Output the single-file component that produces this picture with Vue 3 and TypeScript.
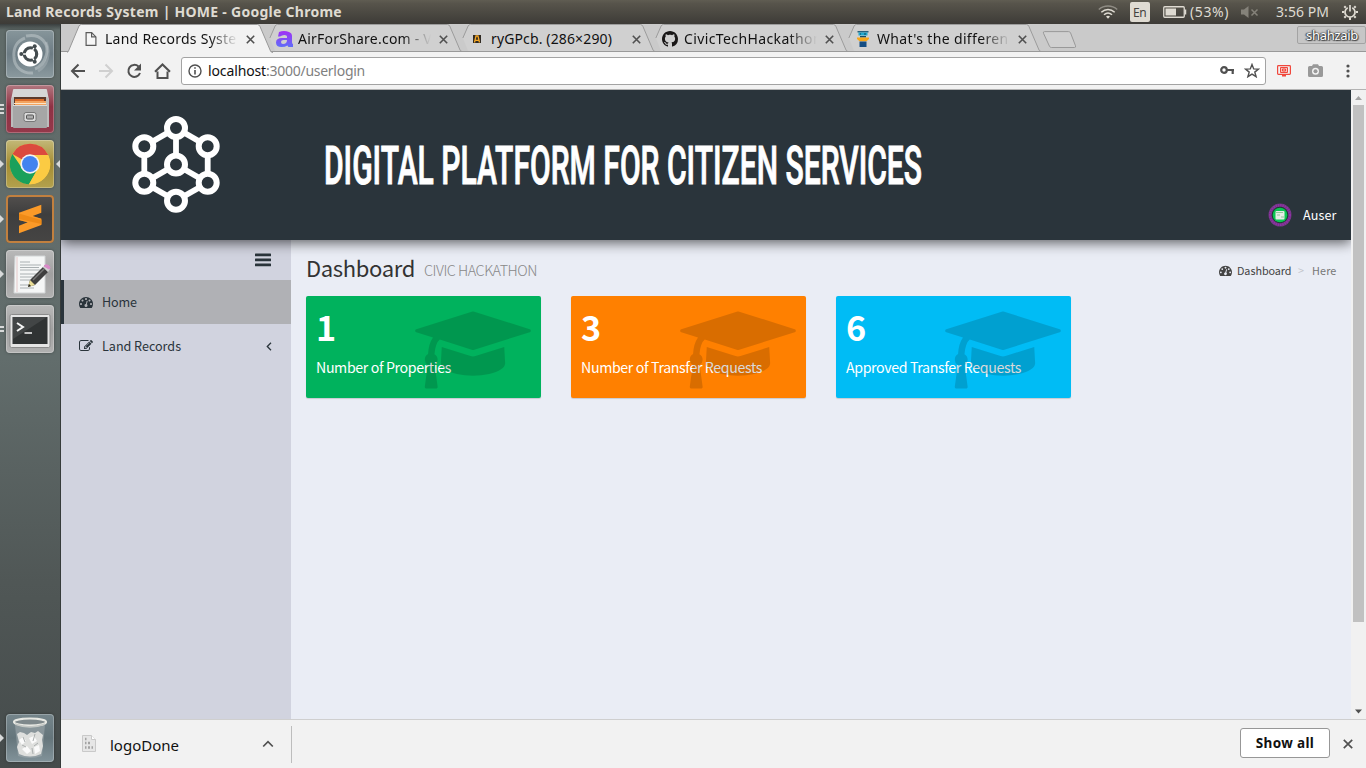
<script setup lang="ts">
import type { Directive } from 'vue'

interface Tab { title: string; icon: string; width: number; active?: boolean }
interface Card { value: number; label: string; tone: string; width: number }
interface App { name: string; marks: number }

/* Spreads a label over a given pixel width by adjusting its letter spacing. */
const vFit: Directive<HTMLElement, number> = {
  mounted(el, binding) {
    const chars = (el.textContent ?? '').trim().length
    const natural = el.getBoundingClientRect().width
    if (chars > 0) el.style.letterSpacing = `${(binding.value - natural) / chars}px`
  },
}

const tabs: Tab[] = [
  { title: 'Land Records Syste', icon: 'page', width: 131.5, active: true },
  { title: 'AirForShare.com - V', icon: 'air', width: 134 },
  { title: 'ryGPcb. (286×290)', icon: 'ry', width: 121 },
  { title: 'CivicTechHackathon', icon: 'github', width: 138 },
  { title: "What's the differen", icon: 'tower', width: 131.5 },
]

const apps: App[] = [
  { name: 'dash', marks: 0 },
  { name: 'files', marks: 3 },
  { name: 'chrome', marks: 1 },
  { name: 'sublime', marks: 1 },
  { name: 'editor', marks: 1 },
  { name: 'terminal', marks: 2 },
  { name: 'trash', marks: 1 },
]

const cards: Card[] = [
  { value: 1, label: 'Number of Properties', tone: 'green', width: 135 },
  { value: 3, label: 'Number of Transfer Requests', tone: 'orange', width: 181 },
  { value: 6, label: 'Approved Transfer Requests', tone: 'blue', width: 175 },
]

const tacho =
  'M384 1152q0-53-37.5-90.5t-90.5-37.5-90.5 37.5-37.5 90.5 37.5 90.5 90.5 37.5 90.5-37.5 37.5-90.5zm192-448q0-53-37.5-90.5t-90.5-37.5-90.5 37.5-37.5 90.5 37.5 90.5 90.5 37.5 90.5-37.5 37.5-90.5zm428 481l101-382q6-26-7.5-48.5t-38.5-29.5-48 6.5-30 39.5l-101 382q-60 5-107 43.5t-63 98.5q-20 77 20 146t117 89 146-20 89-117q16-60-6-117t-72-91zm660-33q0-53-37.5-90.5t-90.5-37.5-90.5 37.5-37.5 90.5 37.5 90.5 90.5 37.5 90.5-37.5 37.5-90.5zm-640-640q0-53-37.5-90.5t-90.5-37.5-90.5 37.5-37.5 90.5 37.5 90.5 90.5 37.5 90.5-37.5 37.5-90.5zm448 192q0-53-37.5-90.5t-90.5-37.5-90.5 37.5-37.5 90.5 37.5 90.5 90.5 37.5 90.5-37.5 37.5-90.5zm320 448q0 261-141 483-19 29-54 29h-1402q-35 0-54-29-141-221-141-483 0-182 71-348t191-286 286-191 348-71 348 71 286 191 191 286 71 348z'
const edit =
  'M888 1184l116-116-152-152-116 116v56h96v96h56zm440-720q-16-16-33 1l-350 350q-17 17-1 33t33-1l350-350q17-17 1-33zm80 594v190q0 119-84.5 203.5t-203.5 84.5h-832q-119 0-203.5-84.5t-84.5-203.5v-832q0-119 84.5-203.5t203.5-84.5h832q63 0 117 25 15 7 18 23 3 17-9 29l-49 49q-14 14-32 8-23-6-45-6h-832q-66 0-113 47t-47 113v832q0 66 47 113t113 47h832q66 0 113-47t47-113v-126q0-13 9-22l64-64q15-15 35-7t20 29zm-96-738l288 288-672 672h-288v-288zm444 132l-92 92-288-288 92-92q28-28 68-28t68 28l152 152q28 28 28 68t-28 68z'
const cap =
  'M1774 836l18 316q4 69-82 128t-235 93.5-323 34.5-323-34.5-235-93.5-82-128l18-316 574 181q22 7 48 7t48-7zM2304 512q0 23-22 31l-1120 352q-4 1-10 1t-10-1l-652-206q-43 34-71 111.5t-34 178.5q63 36 63 109 0 69-58 107l58 433q2 14-8 25-9 11-24 11h-192q-15 0-24-11-10-11-8-25l58-433q-58-38-58-107 0-73 65-111 11-207 98-330l-333-104q-22-8-22-31t22-31l1120-352q4-1 10-1t10 1l1120 352q22 8 22 31z'
const octocat =
  'M8 0C3.58 0 0 3.58 0 8c0 3.54 2.29 6.53 5.47 7.59.4.07.55-.17.55-.38 0-.19-.01-.82-.01-1.49-2.01.37-2.53-.49-2.69-.94-.09-.23-.48-.94-.82-1.13-.28-.15-.68-.52-.01-.53.63-.01 1.08.58 1.23.82.72 1.21 1.87.87 2.33.66.07-.52.28-.87.51-1.07-1.78-.2-3.64-.89-3.64-3.95 0-.87.31-1.59.82-2.15-.08-.2-.36-1.02.08-2.12 0 0 .67-.21 2.2.82.64-.18 1.32-.27 2-.27s1.36.09 2 .27c1.53-1.04 2.2-.82 2.2-.82.44 1.1.16 1.92.08 2.12.51.56.82 1.27.82 2.15 0 3.07-1.87 3.75-3.65 3.95.29.25.54.73.54 1.48 0 1.07-.01 1.93-.01 2.2 0 .21.15.46.55.38A8.01 8.01 0 0 0 16 8c0-4.42-3.58-8-8-8z'

const nodes: [number, number][] = [
  [44, 12], [12.3, 30.3], [75.7, 30.3], [44, 48.5], [12.3, 66.7], [75.7, 66.7], [44, 84.7],
]
const links: [number, number][] = [[0, 1], [0, 2], [0, 3], [1, 4], [2, 5], [3, 4], [3, 5], [4, 6], [5, 6]]
</script>

<template>
  <div class="desktop">
    <header class="panel">
      <b class="panel-title"><span v-fit="336">Land Records System | HOME - Google Chrome</span></b>
      <div class="indicators">
        <svg class="wifi" width="20" height="14" viewBox="0 0 20 14" fill="none" stroke="#dfdbd2" stroke-width="1.5">
          <path d="M.8 4.5C6-.2 14-.2 19.200 4.500" stroke="#8f8c84" />
          <path d="M3.300 7.200c4-3.600 9.400-3.600 13.400 0" />
          <path d="M6 9.800c2.400-2.200 5.600-2.200 8 0" />
          <path d="M8 11.500q2-1.500 4 0l-2 2.200z" fill="#dfdbd2" stroke="none" />
        </svg>
        <span class="lang"><span v-fit="13">En</span></span>
        <svg class="battery" width="25" height="12" viewBox="0 0 25 12">
          <rect x=".75" y=".75" width="20.500" height="10.500" rx="1" fill="none" stroke="#dfdbd2" stroke-width="1.300" />
          <path d="M22.500 3.500v5" stroke="#dfdbd2" stroke-width="1.500" />
          <rect x="2.500" y="2.500" width="10.500" height="7" fill="#dfdbd2" />
        </svg>
        <span class="percent"><span v-fit="39">(53%)</span></span>
        <svg class="sound" width="18" height="12" viewBox="0 0 18 12">
          <path d="M0 3.500h3L7.500 0v12L3 8.500H0z" fill="#85827a" />
          <path d="M10.500 3.500l6 6m0-6l-6 6" stroke="#85827a" stroke-width="1.500" />
        </svg>
        <span class="clock"><span v-fit="53">3:56 PM</span></span>
        <svg class="gear" width="16" height="16" viewBox="0 0 16 16" fill="none" stroke="#dfdbd2">
          <path d="M5.700 3.700a5 5 0 1 0 4.600 0" stroke-width="1.700" />
          <path d="M8 1v6.500" stroke-width="1.700" />
          <path d="M0 8h2.200m11.600 0H16M8 13.500V16M2.300 2.300l1.500 1.500m8.400 0l1.500-1.500M2.300 13.700l1.500-1.500m8.400 0l1.500 1.500" stroke-width="2" />
        </svg>
      </div>
    </header>

    <div class="workspace">
      <nav class="launcher">
        <div v-for="app in apps" :key="app.name" class="slot" :class="app.name">
          <span class="marks">
            <svg v-if="app.marks === 1" width="4" height="8" viewBox="0 0 4 8"><path d="M0 0l4 4-4 4z" fill="#d8dada" /></svg>
            <template v-else><i v-for="n in app.marks" :key="n" /></template>
          </span>
          <span class="tile">
            <svg v-if="app.name === 'dash'" width="48" height="48" viewBox="0 0 48 48">
              <g fill="none" stroke="#c6ced0" stroke-opacity=".5" stroke-width="3">
                <path d="M20 6c15-3 24 8 20 20-2 7-6 11-11 13" />
                <path d="M8 27c0 10 9 17 19 16M8 27c-1-9 3-16 11-19" />
                <path d="M40 12c5 12 1 24-8 29" stroke-opacity=".3" />
              </g>
              <circle cx="24" cy="24" r="12.500" fill="#fff" />
              <circle cx="24.500" cy="24" r="6.200" fill="none" stroke="#444c4f" stroke-width="3.200" />
              <g stroke="#fff" stroke-width="1.300"><path d="M24.500 24l-10 0M24.500 24l5-9M24.500 24l5 9" /></g>
              <circle cx="24.500" cy="24" r="4.500" fill="#fff" />
              <g fill="#444c4f"><circle cx="15.300" cy="24" r="2" /><circle cx="28.700" cy="16.300" r="2" /><circle cx="28.700" cy="31.700" r="2" /></g>
            </svg>
            <svg v-else-if="app.name === 'files'" width="48" height="48" viewBox="0 0 48 48">
              <path d="M7 5q0-1 1-1h32q1 0 1 1l2 10H5z" fill="#d6d6d6" />
              <path d="M5 15q0-2 2-3h34q2 1 2 3v27H5z" fill="#bcbcbc" />
              <path d="M8 12h32v9H8z" fill="#5c3a2c" />
              <path d="M9 14h29v6H9z" fill="#d96c2c" /><path d="M9 16h31v4H9z" fill="#f3a35f" />
              <path d="M8 18.500h32" stroke="#fbe3c6" />
              <path d="M7 20h34v22q0 1-1 1H8q-1 0-1-1z" fill="#a6a6a6" />
              <path d="M7 20.500h34" stroke="#dadada" />
              <rect x="18" y="27.500" width="12" height="9" rx="2" fill="#ddd" stroke="#777" />
              <rect x="20.500" y="30" width="7" height="4" rx="1" fill="#aaa" stroke="#555" />
            </svg>
            <svg v-else-if="app.name === 'chrome'" width="48" height="48" viewBox="0 0 48 48">
              <circle cx="24" cy="24" r="20.300" fill="#fbcb43" />
              <path d="M24 24L6.400 13.900A20.300 20.300 0 0 1 41.900 14.500L42 15H24z" fill="#db4a3e" />
              <path d="M6.400 13.900A20.300 20.300 0 0 0 23 44.300L32 28.500 24 24l-8 4z" fill="#1aa05b" />
              <path d="M24 15h18a20.300 20.300 0 0 1-19 29.300l9-16z" fill="#fbcb43" />
              <circle cx="24" cy="24" r="9.700" fill="#f3f3f3" /><circle cx="24" cy="24" r="8" fill="#4383ef" />
            </svg>
            <svg v-else-if="app.name === 'sublime'" width="48" height="48" viewBox="0 0 48 48">
              <path d="M13 17.700L35.300 23.700V30L21.700 27.300 13 25z" fill="#e8820f" />
              <path d="M13 17.700L35.300 9.700v8L26.700 21 35.300 23.700V30L13 38.300v-7.600l8.700-3.400L13 25z" fill="#fb9a28" />
              <path d="M13 18.500l22.300 6.500v4L13 24z" fill="#ee8a17" />
            </svg>
            <svg v-else-if="app.name === 'editor'" width="48" height="48" viewBox="0 0 48 48">
              <path d="M9 6h30v37H8z" fill="#f5f6f6" stroke="#d2d5d6" />
              <path d="M11 7v35" stroke="#dfb5b5" stroke-width=".7" />
              <path d="M14 12h10m-10 3h21M14 17.500h19M14 20h21m-21 4h20m-20 3h13m-13 3h10m-10 5h9m-9 3h14" stroke="#aab0b2" />
              <path d="M22 37l2-7L37 17l5 5-13 13z" fill="#3f3f3f" /><path d="M27 30l12-12" stroke="#777" stroke-width="1.500" />
              <path d="M37 17l2-2 5 4-2 3z" fill="#d0d0d0" /><path d="M39 15q3-1 5 2 0 2-1 2l-5-3z" fill="#d98bc8" stroke="#d98bc8" />
              <path d="M22 37l2-7 5 5z" fill="#e9dc95" /><path d="M22 37l1-3 2 2z" fill="#222" />
            </svg>
            <svg v-else-if="app.name === 'terminal'" width="48" height="48" viewBox="0 0 48 48">
              <rect x="4" y="9.500" width="40" height="33" rx="1.500" fill="#e5e5e5" stroke="#8b8b8b" />
              <rect x="6.500" y="12" width="35" height="27" fill="#303334" /><path d="M7 12h34L7 34z" fill="#424546" />
              <path d="M11 18l6 4-6 4" fill="none" stroke="#f4f4f4" stroke-width="2" /><path d="M18.500 28h7.500" stroke="#f4f4f4" stroke-width="1.700" />
            </svg>
            <svg v-else width="48" height="48" viewBox="0 0 48 48">
              <path d="M9 11l3 31q12 4 24 0l3-31z" fill="#a4adb0" fill-opacity=".55" />
              <path d="M11 20l3-2 4 1 3 2 4-3 4 1 3-2 5 4-1 5 1 6-2 8q-11 5-22 0l-2-7 2-5z" fill="#dedfdd" />
              <path d="M13 26l4-3 3 4-4 4zm10-2l5-2 3 5-5 3zm-7 11l5-3 4 5-4 3zm12-2l5-2 1 6-5 3z" fill="#fafafa" />
              <path d="M17 23l2 5m10-8l-2 7m5 2l-4 3m-12-1l4 2m6 1l1 6" stroke="#aaaeae" />
              <ellipse cx="24" cy="8" rx="16" ry="3.500" fill="#7e888b" stroke="#e7e8e3" stroke-width="2.200" />
              <path d="M9 10q15 6 30 0" fill="none" stroke="#c4c8c5" stroke-width="1.500" />
            </svg>
          </span>
          <svg v-if="app.name === 'chrome'" class="focus" width="4" height="8" viewBox="0 0 4 8"><path d="M4 0L0 4l4 4z" fill="#d8dada" /></svg>
        </div>
      </nav>

      <div class="browser">
        <div class="tabstrip">
          <div v-for="tab in tabs" :key="tab.title" class="tab" :class="{ active: tab.active }">
            <svg class="shape" width="207" height="29" viewBox="0 0 207 29">
              <path v-if="tab.active" d="M0 29L0 28.500Q1 28 1.500 27L12 2Q12.800.5 14.500.5H190.500Q192 .5 193 2.500L203.500 27Q204 28.500 206 28.500V29z" fill="#f2f2f2" />
              <path v-else d="M6.500 14.500L12 2Q12.800.5 14.500.5H190.500Q192 .5 193 2.500L203.500 27 206 28H12z" fill="#d0d0d0" />
              <path v-if="tab.active" d="M0 28.500Q1 28 1.500 27L12 2Q12.800.5 14.500.5H190.500Q192 .5 193 2.500L203.500 27Q204 28.500 206 28.500" fill="none" stroke="#999" />
              <path v-else d="M6.500 14.500L12 2Q12.800.5 14.500.5H190.500Q192 .5 193 2.500L203.500 27Q204 28 205 28" fill="none" stroke="#999" />
            </svg>
            <span class="favicon">
              <svg v-if="tab.icon === 'page'" width="16" height="16" viewBox="0 0 16 16" fill="#f6f6f6" stroke="#5a5a5a" stroke-width="1.200"><path d="M3.100 1.600h5.500l4.300 4.300v8.500H3.100z" /><path d="M8.600 1.600v4.300h4.300" fill="none" /></svg>
              <svg v-else-if="tab.icon === 'air'" width="17" height="16" viewBox="0 0 17 16">
                <defs><linearGradient id="air" x1="0" y1="0" x2="0" y2="1"><stop offset="0" stop-color="#a22ff5" /><stop offset="1" stop-color="#5f6df8" /></linearGradient></defs>
                <path d="M3 1Q8-1 13 1q3 1 3 4v6q0 2 1 2v3h-4q-1 0-1.500-1.500Q9 16 5.500 16 0 16 0 11.500T6 7h5V5.500Q11 4 8.500 4T4 5.500H2zM11 9H7.500Q5 9 5 11t2 2q4 0 4-4z" fill="url(#air)" fill-rule="evenodd" />
              </svg>
              <svg v-else-if="tab.icon === 'ry'" width="16" height="16" viewBox="0 0 16 16"><rect x="4" y="4" width="8" height="8" fill="#2f2a24" /><path d="M5.500 11.500l1.500-6.500h2l1.500 6.500M6.500 9.300h3" fill="none" stroke="#f5a623" stroke-width="1.300" /></svg>
              <svg v-else-if="tab.icon === 'github'" width="16" height="16" viewBox="0 0 16 16"><path :d="octocat" fill="#191717" /></svg>
              <svg v-else width="16" height="16" viewBox="0 0 16 16">
                <path d="M2.500 0h11v1.500h-11z" fill="#28617d" /><path d="M3.500 1.500h9v3h-9z" fill="#20a8cf" /><path d="M5 2.500h1v1H5zm4 0h2v1H9z" fill="#07475f" />
                <path d="M5 5h6v1.500H5z" fill="#174c65" /><path d="M2 6.500h12V8l-2.500 2.200h-7L2 8z" fill="#f7a71b" /><path d="M4.500 10.500h7v5.500h-7z" fill="#164e83" />
              </svg>
            </span>
            <span class="tab-title" :class="{ fade: tab.icon !== 'ry' }"><span v-fit="tab.width">{{ tab.title }}</span></span>
            <svg class="close" width="9" height="9" viewBox="0 0 9 9"><path d="M.8.8l7.400 7.400m0-7.400L.8 8.200" stroke="#505050" stroke-width="1.600" /></svg>
          </div>
          <svg class="newtab" width="36" height="17" viewBox="0 0 36 17"><path d="M2.500.6h24q1.500 0 2 1.200l5 13q.6 1.700-1 1.700h-23q-1.500 0-2-1.200l-6-13Q.8.6 2.500.6z" fill="#d0d0d0" stroke="#999" /></svg>
          <span class="profile"><span v-fit="52">shahzaib</span></span>
        </div>

        <div class="toolbar">
          <svg class="nav" width="102" height="18" viewBox="0 0 102 18" fill="none" stroke="#505050" stroke-width="2">
            <path d="M16 9H3m6.500-6.500L3 9l6.500 6.500" />
            <path d="M30 9h13m-6.500-6.500L43 9l-6.500 6.500" stroke="#d0d0d0" />
            <path d="M69.500 4.500A6 6 0 1 0 71 11" /><path d="M72 1.500v7h-7z" fill="#505050" stroke="none" />
            <path d="M86 9.700l7.500-7.200 7.500 7.200M88.500 9.500v6.500h10V9.500" />
          </svg>
          <div class="omnibox">
            <svg width="14" height="14" viewBox="0 0 14 14" fill="none" stroke="#505050" stroke-width="1.400"><circle cx="7" cy="7" r="6" /><path d="M7 6v4.500M7 3.300v1.500" stroke-width="1.600" /></svg>
            <span class="url"><span v-fit="58" class="host">localhost</span><span v-fit="99">:3000/userlogin</span></span>
            <svg width="15" height="9" viewBox="0 0 15 9" fill="none" stroke="#505050" stroke-width="2.200"><circle cx="4" cy="4" r="2.800" /><path d="M6.500 4H14M12.700 4v4" /></svg>
            <svg class="star" width="16" height="15" viewBox="0 0 16 15"><path d="M8 1.500l1.700 4.400 4.800.2-3.700 3 1.300 4.600L8 11.100l-4.100 2.600 1.300-4.600-3.700-3 4.800-.2z" fill="none" stroke="#505050" stroke-width="1.400" /></svg>
          </div>
          <svg class="ext" width="14" height="12" viewBox="0 0 14 12" fill="none" stroke="#f0473c"><rect x=".6" y=".6" width="12.800" height="8.800" rx=".8" stroke-width="1.200" /><path d="M3.500 2.500h7v5h-7zM5.500 4h3v2h-3z" fill="#fac2bd" /><path d="M5 10h4v1.500H5z" fill="#f0473c" stroke="none" /></svg>
          <svg class="cam" width="15" height="13" viewBox="0 0 15 13"><path d="M1.500 2H4l1-1.800h5L11 2h2.500Q15 2 15 3.500v8q0 1.500-1.500 1.500h-12Q0 13 0 11.500v-8Q0 2 1.500 2z" fill="#999" /><circle cx="7.500" cy="7.300" r="3.500" fill="#f2f2f2" /><circle cx="7.500" cy="7.300" r="2" fill="#999" /></svg>
          <svg class="menu" width="4" height="14" viewBox="0 0 4 14" fill="#505050"><circle cx="2" cy="2" r="1.600" /><circle cx="2" cy="7" r="1.600" /><circle cx="2" cy="12" r="1.600" /></svg>
        </div>

        <div class="viewport">
          <div class="page">
            <div class="banner">
              <svg class="logo" width="88" height="97" viewBox="0 0 88 97" fill="none" stroke="#fff">
                <path v-for="(l, i) in links" :key="'l' + i" :d="`M${nodes[l[0]].join(' ')}L${nodes[l[1]].join(' ')}`" stroke-width="5.800" />
                <circle v-for="(n, i) in nodes" :key="'n' + i" :cx="n[0]" :cy="n[1]" r="9" fill="#2a343b" stroke-width="6" />
              </svg>
              <svg class="headline" width="600" height="60" viewBox="0 0 600 60">
                <text x="-1" y="49" textLength="598" lengthAdjust="spacingAndGlyphs">DIGITAL PLATFORM FOR CITIZEN SERVICES</text>
              </svg>
              <div class="user">
                <svg width="24" height="24" viewBox="0 0 24 24">
                  <circle cx="12" cy="12" r="11.500" fill="#6b3a7c" /><circle cx="12" cy="12" r="9.800" fill="none" stroke="#8f2fa5" stroke-width="2.500" stroke-dasharray="1.500 .8" />
                  <circle cx="12" cy="12" r="8.300" fill="#1a3d31" /><circle cx="12" cy="12" r="7.300" fill="#0bc552" />
                  <rect x="7.500" y="8" width="9" height="8.500" rx="1" fill="#e5ede4" /><path d="M8 9.500h7M9 12h3m1 2h3" stroke="#91c79b" />
                </svg>
                <span><span v-fit="33.500">Auser</span></span>
              </div>
            </div>

            <div class="body">
              <aside class="sidebar">
                <div class="toggle"><svg width="16" height="14" viewBox="0 0 16 14" fill="#2a343b"><rect y=".5" width="16" height="2.700" rx=".5" /><rect y="5.500" width="16" height="2.700" rx=".5" /><rect y="10.500" width="16" height="2.700" rx=".5" /></svg></div>
                <a class="item current"><svg width="14" height="14" viewBox="0 0 1792 1792"><path :d="tacho" /></svg><span><span v-fit="35">Home</span></span></a>
                <a class="item"><svg width="14" height="14" viewBox="0 0 1792 1792"><path :d="edit" /></svg><span><span v-fit="79">Land Records</span></span>
                  <svg class="chevron" width="6" height="9" viewBox="0 0 6 9"><path d="M5 .8L1.300 4.500 5 8.200" fill="none" stroke="#2a343b" stroke-width="1.300" /></svg>
                </a>
              </aside>
              <main class="content">
                <div class="heading">
                  <h1><span v-fit="109">Dashboard</span></h1>
                  <small><span v-fit="113">CIVIC HACKATHON</span></small>
                  <div class="crumbs">
                    <svg width="13" height="13" viewBox="0 0 1792 1792"><path :d="tacho" fill="#444" /></svg>
                    <span class="crumb"><span v-fit="54.500">Dashboard</span></span><span class="sep">&gt;</span><span class="here"><span v-fit="24.500">Here</span></span>
                  </div>
                </div>
                <div class="cards">
                  <section v-for="card in cards" :key="card.label" class="card" :class="card.tone">
                    <h3>{{ card.value }}</h3>
                    <p><span v-fit="card.width">{{ card.label }}</span></p>
                    <svg class="cap" width="116" height="90" viewBox="0 0 2304 1792"><path :d="cap" fill="rgba(0,0,0,.15)" /></svg>
                  </section>
                </div>
              </main>
            </div>
          </div>
          <div class="scrollbar">
            <svg width="15" height="15" viewBox="0 0 15 15"><path d="M4 10l3.500-4L11 10z" fill="#a3a3a3" /></svg>
            <div class="thumb" />
            <svg width="15" height="15" viewBox="0 0 15 15"><path d="M4 5.500l3.500 4 3.500-4z" fill="#505050" /></svg>
          </div>
        </div>

        <footer class="shelf">
          <svg class="doc" width="14" height="17" viewBox="0 0 14 17"><path d="M.5.5h9l4 4v12H.5z" fill="#e6e6e6" stroke="#c9c9c9" /><path d="M9.500.5v4h4" fill="#fff" stroke="#c9c9c9" /><path d="M3 4h1.500M3 8h1.500m1.500 0h2M3 12.500h1.500m1.500 0h2m1.500 0h1.500" stroke="#a3a3a3" stroke-width="2.300" /></svg>
          <span class="file"><span v-fit="69">logoDone</span></span>
          <svg class="up" width="12" height="8" viewBox="0 0 12 8"><path d="M1.200 6.500L6 1.700l4.800 4.800" fill="none" stroke="#505050" stroke-width="1.700" /></svg>
          <span class="divider" />
          <button type="button"><span v-fit="58.500">Show all</span></button>
          <svg class="dismiss" width="10" height="10" viewBox="0 0 10 10"><path d="M.8.8l8.400 8.400m0-8.400L.8 9.200" stroke="#505050" stroke-width="1.700" /></svg>
        </footer>
      </div>
    </div>
  </div>
</template>

<style>
body { margin: 0; overflow: hidden; }
</style>

<style scoped>
* { box-sizing: border-box; }
svg { display: block; flex: none; }
.desktop { width: 1366px; height: 768px; display: flex; flex-direction: column; overflow: hidden; font: 14px/20px "Noto Sans", "Open Sans", sans-serif; white-space: nowrap; }
.panel { height: 24px; flex: none; display: flex; align-items: center; justify-content: space-between; padding: 0 8px 0 6px; background: linear-gradient(#605d52 0, #57544b 15%, #3d3b37 100%); color: #dfdbd2; }
.panel-title { font-size: 14px; }
.indicators { display: flex; align-items: center; }
.lang { width: 20px; height: 20px; margin: 0 13px 0 12px; padding-left: 3px; border-radius: 2px; background: #dfdbd2; color: #45433e; font-size: 12px; line-height: 21px; }
.percent { width: 40px; margin-left: 2px; }
.sound { margin: 0 18px 0 11px; }
.clock { width: 53px; margin: 0 13px 0 -1px; }
.workspace { flex: 1; display: flex; min-height: 0; }

.launcher { width: 61px; flex: none; display: flex; flex-direction: column; gap: 7px; padding: 6px 0; border-right: 1px solid #363b3a; background: linear-gradient(#3a3f3f 0, #606b69 6px, #626d6c 45%, #505756 75%, #454b4b 100%); }
.slot { display: flex; align-items: center; height: 48px; }
.slot.trash { margin-top: auto; }
.marks { width: 6px; display: flex; flex-direction: column; gap: 2px; }
.marks i { width: 4px; height: 2px; background: #d8dada; }
.tile { width: 48px; height: 48px; border-radius: 4px; overflow: hidden; background: #83939a; box-shadow: inset 0 0 0 1px rgba(255, 255, 255, .25), 0 0 3px rgba(0, 0, 0, .35); }
.dash .tile { background: linear-gradient(#87969b, #6d7c84 50%, #8b9a9f); }
.files .tile { background: linear-gradient(#b1777f, #8e3244 45%, #94384a); }
.chrome .tile { background: linear-gradient(#c3b878, #a58d33 50%, #b3a14d); }
.sublime .tile { background: linear-gradient(#53504e, #3e3e3e 40%, #464544); box-shadow: inset 0 0 0 2px #c1803f; }
.editor .tile, .terminal .tile { background: linear-gradient(#b9b9b9, #a0a0a0 50%, #b1b1b1); }
.trash .tile { background: linear-gradient(#75858b, #65757b 50%, #82939a); }
.focus { margin-left: 2px; }

.browser { flex: 1; display: flex; flex-direction: column; min-width: 0; }
.tabstrip { height: 28px; flex: none; display: flex; padding-left: 6px; background: #cacaca; box-shadow: inset 0 -1px #999; }
.tab { position: relative; width: 193px; display: flex; align-items: center; padding-left: 16px; }
.tab.active { z-index: 2; }
.tab .shape { position: absolute; left: 0; top: 0; }
.tab:not(.active) .shape { height: 28px; }
.favicon, .tab-title, .close { position: relative; }
.favicon { width: 16px; height: 16px; margin-top: 2px; }
.tab-title { width: 138px; margin: 2px 2.5px 0 6px; color: #111; font-size: 14px; line-height: 22px; }
.fade { -webkit-mask: linear-gradient(90deg, #000 104px, transparent 133px); mask: linear-gradient(90deg, #000 104px, transparent 133px); }
.close { margin-top: 2px; }
.newtab { margin: 7px 0 0 10px; }
.profile { align-self: flex-start; height: 18px; margin: 2px 0 0 auto; width: 69px; padding-left: 8px; border: 1px solid #a3a3a3; border-radius: 2px; background: #c6c6c6; color: #fff; font-size: 13px; line-height: 16px; text-shadow: 0 0 1px #333, 0 0 2px #333, 1px 1px 1px #444, -1px 0 1px #444; }

.toolbar { height: 38px; flex: none; display: flex; align-items: center; padding-left: 8px; border-bottom: 1px solid #b3b3b3; background: #f2f2f2; }
.omnibox { width: 1085px; height: 28px; margin-left: 10px; display: flex; align-items: center; padding: 0 5px 0 6px; border: 1px solid #a3a3a3; border-radius: 3px; background: #fff; }
.url { flex: 1; margin-left: 6px; color: #808080; font-size: 14px; }
.host { color: #111; }
.star { margin-left: 9px; }
.ext { margin-left: 11px; }
.cam { margin-left: 17px; }
.menu { margin-left: 23px; }

.viewport { flex: 1; display: flex; min-height: 0; }
.page { width: 1290px; display: flex; flex-direction: column; font-family: "Noto Sans CJK SC", "Noto Sans CJK JP", "Open Sans", sans-serif; }
.banner { position: relative; z-index: 1; height: 150px; flex: none; display: flex; padding: 0 15px 0 71px; background: #2a343b; box-shadow: 0 3px 12px rgba(0, 0, 0, .6); clip-path: inset(0 0 -20px 0); }
.logo { margin-top: 26px; }
.headline { margin: 45px 0 0 105px; overflow: visible; }
.headline text { font: 500 54.500px "Liberation Sans Narrow", Roboto, sans-serif; fill: #fff; stroke: #fff; stroke-width: 1px; }
.user { display: flex; align-items: center; align-self: flex-end; gap: 11px; height: 24px; margin: 0 0 13px auto; color: #fff; font-size: 12.600px; }
.user > span { width: 33px; }
.body { flex: 1; display: flex; min-height: 0; }
.sidebar { width: 230px; flex: none; background: #d1d3df; color: #2a343b; font-size: 12.600px; }
.toggle { height: 40px; display: flex; justify-content: flex-end; padding: 13px 20px 0 0; }
.item { height: 44px; display: flex; align-items: center; gap: 9px; padding: 0 19px 0 15px; border-left: 3px solid transparent; fill: #2a343b; }
.current { border-left-color: #2a343b; background: #b0b1b5; }
.chevron { margin-left: auto; }
.content { flex: 1; padding: 14px 15px 0; background: #eaedf5; }
.heading { height: 42px; display: flex; color: #333; }
h1 { margin: 0; width: 109px; font-size: 22px; font-weight: 400; line-height: 26px; }
small { margin: 3px 0 0 9px; color: #888; font-size: 14.400px; font-weight: 300; line-height: 26px; }
.crumbs { display: flex; align-items: center; height: 32px; margin: 0 -1px 0 auto; font-size: 10.800px; color: #444; }
.crumb { width: 54px; margin-left: 5px; }
.sep { width: 8px; margin: 0 6px 0 7px; color: #c3c5cb; }
.here { width: 25px; color: #777; }
.cards { display: flex; gap: 30px; }
.card { position: relative; width: 235px; height: 102px; padding: 9px 10px; border-radius: 2px; box-shadow: 0 1px 1px rgba(0, 0, 0, .15); color: #fff; }
.green { background: #00b25d; }
.orange { background: #ff8000; }
.blue { background: #00bcf5; }
h3 { margin: 0; font-size: 34.200px; font-weight: 700; line-height: 42px; }
p { margin: 10px 0 0; font-size: 14.200px; line-height: 21px; }
.cap { position: absolute; right: 10px; top: 9px; }
.scrollbar { width: 15px; display: flex; flex-direction: column; background: #f1f1f1; }
.thumb { width: 11px; height: 517px; margin: 0 2px auto; background: #c1c1c1; }

.shelf { height: 49px; flex: none; display: flex; align-items: center; border-top: 1px solid #cfcfcf; padding-left: 21px; background: #f2f2f2; }
.doc { margin-top: -1px; }
.file { width: 152px; margin: 1px 0 0 14px; color: #111; font-size: 15px; }
.divider { width: 1px; height: 37px; margin-left: 17px; background: #bdbdbd; }
button { width: 90px; height: 30px; margin: -2px 13px 0 auto; padding: 0; border: 1px solid #979797; border-radius: 3px; background: #fff; color: #111; font: bold 13.500px/26px "Noto Sans", sans-serif; text-align: center; }
.dismiss { margin-right: 13px; }
</style>
